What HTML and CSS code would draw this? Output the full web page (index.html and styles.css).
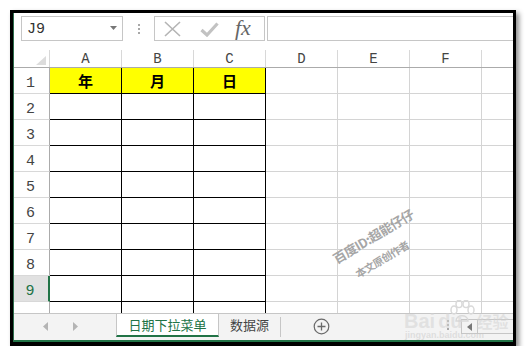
FILE: index.html
```html
<!DOCTYPE html>
<html>
<head>
<meta charset="utf-8">
<link rel="stylesheet" href="styles.css">
</head>
<body>
<div class="frame">
  <div class="inner">
    <div class="fbar">
      <div class="namebox">
        <span class="nb-text">J9</span>
        <svg class="nb-arrow" width="7" height="4" viewBox="0 0 7 4"><polygon points="0,0 7,0 3.5,4" fill="#777"/></svg>
      </div>
      <div class="grip"><i></i><i></i><i></i></div>
      <div class="fbtns">
        <svg class="ic-x" width="17" height="16" viewBox="0 0 17 16"><path d="M1 1 L16 15 M16 1 L1 15" stroke="#b4b4b4" stroke-width="1.6" fill="none"/></svg>
        <svg class="ic-ok" width="19" height="15" viewBox="0 0 19 15"><path d="M1.5 8 L7 13 L17.5 1.5" stroke="#c2c2c2" stroke-width="3.2" fill="none"/></svg>
        <span class="ic-fx">fx</span>
      </div>
      <div class="finput"></div>
    </div>

    <div class="sheet">
      <div class="hrow">
        <div class="corner"><svg width="10" height="9" viewBox="0 0 10 9"><polygon points="10,0 10,9 0,9" fill="#dcdcdc"/></svg></div>
        <div class="ch">A</div><div class="ch">B</div><div class="ch">C</div><div class="ch">D</div><div class="ch">E</div><div class="ch">F</div><div class="ch"></div>
      </div>
      <div class="row">
        <div class="rh">1</div>
        <div class="c b y">年</div><div class="c b y">月</div><div class="c b y">日</div>
        <div class="c"></div><div class="c"></div><div class="c"></div><div class="c"></div>
      </div>
      <div class="row"><div class="rh">2</div><div class="c b"></div><div class="c b"></div><div class="c b"></div><div class="c"></div><div class="c"></div><div class="c"></div><div class="c"></div></div>
      <div class="row"><div class="rh">3</div><div class="c b"></div><div class="c b"></div><div class="c b"></div><div class="c"></div><div class="c"></div><div class="c"></div><div class="c"></div></div>
      <div class="row"><div class="rh">4</div><div class="c b"></div><div class="c b"></div><div class="c b"></div><div class="c"></div><div class="c"></div><div class="c"></div><div class="c"></div></div>
      <div class="row"><div class="rh">5</div><div class="c b"></div><div class="c b"></div><div class="c b"></div><div class="c"></div><div class="c"></div><div class="c"></div><div class="c"></div></div>
      <div class="row"><div class="rh">6</div><div class="c b"></div><div class="c b"></div><div class="c b"></div><div class="c"></div><div class="c"></div><div class="c"></div><div class="c"></div></div>
      <div class="row"><div class="rh">7</div><div class="c b"></div><div class="c b"></div><div class="c b"></div><div class="c"></div><div class="c"></div><div class="c"></div><div class="c"></div></div>
      <div class="row"><div class="rh">8</div><div class="c b"></div><div class="c b"></div><div class="c b"></div><div class="c"></div><div class="c"></div><div class="c"></div><div class="c"></div></div>
      <div class="row"><div class="rh sel">9</div><div class="c b"></div><div class="c b"></div><div class="c b"></div><div class="c"></div><div class="c"></div><div class="c"></div><div class="c"></div></div>
      <div class="row last"><div class="rh"></div><div class="c b"></div><div class="c b"></div><div class="c b"></div><div class="c"></div><div class="c"></div><div class="c"></div><div class="c"></div></div>
    </div>

    <div class="tabs">
      <div class="nav">
        <svg width="5" height="9" viewBox="0 0 5 9"><polygon points="5,0 5,9 0,4.5" fill="#b4b4b4"/></svg>
        <svg width="5" height="9" viewBox="0 0 5 9"><polygon points="0,0 0,9 5,4.5" fill="#b4b4b4"/></svg>
      </div>
      <div class="tab active">日期下拉菜单</div>
      <div class="tab other">数据源</div>
      <div class="addsheet"><svg width="17" height="17" viewBox="0 0 17 17"><circle cx="8.5" cy="8.5" r="7.3" stroke="#6a6a6a" stroke-width="1.2" fill="none"/><path d="M4.5 8.5 H12.5 M8.5 4.5 V12.5" stroke="#6a6a6a" stroke-width="1.3"/></svg></div>
      <div class="spacer"></div>
      <div class="split"><i></i><i></i><i></i></div>
      <div class="hscroll"><svg width="5" height="8" viewBox="0 0 5 8"><polygon points="5,0 5,8 0,4" fill="#777"/></svg><span class="thumb"></span></div>
    </div>

    <div class="wm1">百度ID:超能仔仔</div>
    <div class="wm2">本文原创作者</div>

    <div class="bd">
      <svg class="paw" width="26" height="24" viewBox="0 0 26 24"><g fill="none" stroke="#d9d9d9" stroke-width="1.5"><ellipse cx="5" cy="10" rx="3" ry="4"/><ellipse cx="10" cy="4" rx="3" ry="3.6"/><ellipse cx="17" cy="4" rx="3" ry="3.6"/><ellipse cx="22" cy="10" rx="3" ry="4"/><path d="M7 21 C7 14 19 14 19 21 Z"/></g></svg>
      <div class="bd-logo">Bai<span class="bd-du">du</span><span class="bd-jy">经验</span></div>
      <div class="bd-url">jingyan.baidu.com</div>
    </div>
  </div>
</div>
</body>
</html>
```

FILE: styles.css
```css
html, body {
  margin: 0;
  padding: 0;
  background: #ffffff;
}

.frame {
  position: relative;
  margin: 10px 0 0 10px;
  width: 500px;
  height: 329px;
  border: 3px solid #000;
  border-bottom-width: 4px;
  box-shadow: 3px 3px 5px rgba(0, 0, 0, 0.45);
  overflow: hidden;
}

.inner {
  position: relative;
  height: 327px;
  border-left: 1px solid #2d6e4d;
  border-bottom: 2px solid #217346;
  background: #fff;
  overflow: hidden;
  display: flex;
  flex-direction: column;
}

/* formula bar */
.fbar {
  height: 37px;
  flex: none;
  display: flex;
  align-items: flex-start;
  padding-top: 3px;
  box-sizing: border-box;
}

.namebox {
  margin-left: 7px;
  width: 102px;
  height: 25px;
  box-sizing: border-box;
  border: 1px solid #c6c6c6;
  display: flex;
  align-items: center;
  justify-content: space-between;
  padding: 0 5px 0 5px;
}

.nb-text {
  font-family: "Liberation Mono", monospace;
  font-size: 15px;
  color: #333;
  padding-top: 2px;
}

.nb-arrow {
  margin-top: -2px;
}

.grip {
  width: 31px;
  height: 25px;
  display: flex;
  flex-direction: column;
  align-items: center;
  justify-content: center;
  gap: 2px;
}

.grip i, .split i {
  display: block;
  width: 2px;
  height: 2px;
  background: #a8a8a8;
}

.fbtns {
  width: 111px;
  height: 25px;
  box-sizing: border-box;
  border: 1px solid #c6c6c6;
  display: flex;
  align-items: center;
  padding-left: 9px;
}

.ic-x { margin-top: 1px; }
.ic-ok { margin-left: 19px; margin-top: 2px; }

.ic-fx {
  margin-left: 16px;
  font-family: "Liberation Serif", serif;
  font-style: italic;
  font-size: 22px;
  color: #666;
  line-height: 1;
  margin-top: -2px;
}

.finput {
  margin-left: 2px;
  flex: 1;
  height: 25px;
  box-sizing: border-box;
  border: 1px solid #c6c6c6;
  border-right: none;
}

/* sheet */
.sheet {
  flex: none;
  height: 263px;
  overflow: hidden;
  width: 499px;
}

.hrow, .row {
  display: flex;
  width: 700px;
}

.hrow {
  height: 18px;
  box-sizing: border-box;
  border-bottom: 1px solid #ababab;
}

.corner {
  width: 36px;
  flex: none;
  box-sizing: border-box;
  border-right: 1px solid #d8d8d8;
  display: flex;
  align-items: flex-end;
  justify-content: flex-end;
  padding: 0 3px 2px 0;
}

.ch {
  width: 72px;
  flex: none;
  box-sizing: border-box;
  border-right: 1px solid #d8d8d8;
  font-family: "Liberation Mono", monospace;
  font-size: 14px;
  color: #444;
  text-align: center;
  line-height: 19px;
}

.row {
  height: 26px;
}

.row.last {
  height: 11px;
}

.rh {
  width: 36px;
  flex: none;
  box-sizing: border-box;
  border-right: 1px solid #ababab;
  border-bottom: 1px solid #d8d8d8;
  font-family: "Liberation Mono", monospace;
  font-size: 15px;
  color: #444;
  display: flex;
  align-items: flex-end;
  justify-content: center;
  padding: 0 2px 1px 0;
  line-height: 17px;
}

.rh.sel {
  background: #e1e1e1;
  color: #217346;
  border-right: 2px solid #217346;
}

.row.last .rh {
  border-bottom: none;
}

.c {
  width: 72px;
  flex: none;
  box-sizing: border-box;
  border-right: 1px solid #d4d4d4;
  border-bottom: 1px solid #d4d4d4;
}

.row.last .c {
  border-bottom: none;
}

.c.b {
  border-right-color: #000;
  border-bottom-color: #000;
}

.c.y {
  background: #ffff00;
  font-family: "Noto Sans CJK SC", sans-serif;
  font-weight: 700;
  font-size: 15px;
  color: #000;
  text-align: center;
  line-height: 25px;
}

/* tabs */
.tabs {
  flex: none;
  height: 27px;
  box-sizing: border-box;
  border-top: 1px solid #c6c6c6;
  background: #f3f3f3;
  display: flex;
  align-items: flex-start;
}

.nav {
  width: 102px;
  height: 24px;
  display: flex;
  align-items: center;
  padding-left: 29px;
  box-sizing: border-box;
  gap: 25px;
  flex: none;
}

.tab {
  height: 22px;
  font-family: "Noto Sans CJK SC", sans-serif;
  font-size: 13px;
  line-height: 21px;
  flex: none;
}

.tab.active {
  width: 103px;
  box-sizing: border-box;
  background: #fff;
  border-left: 1px solid #c6c6c6;
  border-right: 1px solid #c6c6c6;
  border-bottom: 2px solid #217346;
  color: #217346;
  text-align: center;
  height: 23px;
}

.tab.other {
  color: #444;
  padding: 0 12px 0 11px;
  position: relative;
  height: 24px;
  line-height: 22px;
}

.tab.other::after {
  content: "";
  position: absolute;
  right: 0;
  top: 3px;
  width: 1px;
  height: 20px;
  background: #c6c6c6;
}

.addsheet {
  margin-left: 32px;
  margin-top: 4px;
  width: 17px;
  height: 17px;
  flex: none;
}

.spacer { flex: 1; }

.split {
  width: 4px;
  height: 22px;
  display: flex;
  flex-direction: column;
  align-items: center;
  justify-content: center;
  gap: 2px;
  margin-right: 11px;
  flex: none;
}

.hscroll {
  width: 52px;
  height: 15px;
  margin-top: 5px;
  box-sizing: border-box;
  border: 1px solid #c6c6c6;
  border-right: none;
  display: flex;
  align-items: center;
  padding-left: 5px;
  flex: none;
}

.thumb {
  width: 1px;
  height: 13px;
  background: #c6c6c6;
  margin-left: 5px;
}

/* overlays */
.wm1, .wm2 {
  position: absolute;
  font-family: "Noto Sans CJK SC", sans-serif;
  font-weight: 700;
  color: #a6a6a6;
  white-space: nowrap;
  transform: translate(-50%, -50%) rotate(-31deg);
  letter-spacing: -0.5px;
}

.wm1 {
  left: 359px;
  top: 223px;
  font-size: 13px;
}

.wm2 {
  left: 368px;
  top: 246px;
  font-size: 10.5px;
}

.bd {
  position: absolute;
  left: 389px;
  top: 284px;
  width: 110px;
  height: 43px;
  pointer-events: none;
}

.paw {
  position: absolute;
  left: 46px;
  top: 3px;
}

.bd-logo {
  position: absolute;
  left: 1px;
  top: 16px;
  font-family: "Liberation Sans", sans-serif;
  font-weight: 700;
  font-size: 20px;
  line-height: 17px;
  color: rgba(210, 210, 210, 0.55);
  white-space: nowrap;
}

.bd-du {
  margin-left: 3px;
}

.bd-jy {
  margin-left: 14px;
  font-family: "Noto Sans CJK SC", sans-serif;
  font-size: 16px;
}

.bd-url {
  position: absolute;
  left: 2px;
  top: 34px;
  font-family: "Liberation Sans", sans-serif;
  font-weight: 700;
  font-size: 9px;
  line-height: 9px;
  color: rgba(200, 200, 200, 0.5);
  white-space: nowrap;
}
```
